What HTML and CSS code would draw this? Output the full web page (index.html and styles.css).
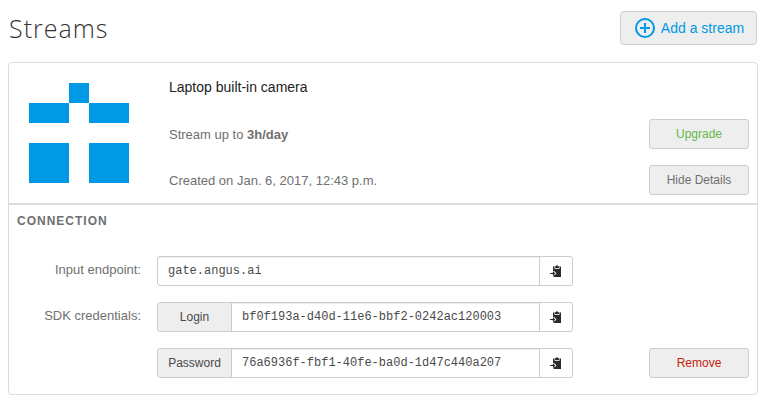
FILE: index.html
```
<!DOCTYPE html>
<html lang="en">
<head>
<meta charset="utf-8">
<title>Streams</title>
<link rel="stylesheet" href="styles.css">
</head>
<body>
<svg class="defs" width="0" height="0" aria-hidden="true">
  <symbol id="paste" viewBox="0 0 12 12">
    <path fill="#2b2b2b" d="M3 1.500h8V12H3.500V9.900H5L6.500 8.500 4.500 6.300H3z"/>
    <path fill="none" stroke="#fff" stroke-width=".8" d="M4.800 1.500v2h4.400v-2"/>
    <path fill="#2b2b2b" d="M5.200 3.100V1.300h.7C6 .6 6.400.2 7 .2s1 .4 1.100 1.100h.7v1.800z"/>
    <path fill="none" stroke="#2b2b2b" stroke-width="1.100" d="M0 8.500h4.500M2.900 6.800l1.700 1.700-1.700 1.700"/>
  </symbol>
</svg>
<header class="page-header">
  <h1>Streams</h1>
  <button class="btn btn-add">
    <svg width="20" height="20" viewBox="0 0 20 20" fill="none" stroke="#0099e5" stroke-width="2"><circle cx="10" cy="10" r="9"/><path d="M10 5v10M5 10h10"/></svg>
    <span>Add a stream</span>
  </button>
</header>
<main class="panel">
  <section class="summary">
    <svg class="identicon" width="100" height="100" viewBox="0 0 5 5" shape-rendering="crispEdges"><path fill="#0099e5" d="M2 0h1v1H2zM0 1h2v1H0zM3 1h2v1H3zM0 3h2v2H0zM3 3h2v2H3z"/></svg>
    <div class="info">
      <h2>Laptop built-in camera</h2>
      <div class="line"><span>Stream up to <b>3h/day</b></span><button class="btn upgrade">Upgrade</button></div>
      <div class="line"><span>Created on Jan. 6, 2017, 12:43 p.m.</span><button class="btn">Hide Details</button></div>
    </div>
  </section>
  <section class="connection">
    <h3>Connection</h3>
    <div class="row">
      <label>Input endpoint:</label>
      <div class="group"><code>gate.angus.ai</code><span class="copy"><svg width="12" height="12"><use href="#paste"/></svg></span></div>
    </div>
    <div class="row">
      <label>SDK credentials:</label>
      <div class="group"><span class="addon">Login</span><code>bf0f193a-d40d-11e6-bbf2-0242ac120003</code><span class="copy"><svg width="12" height="12"><use href="#paste"/></svg></span></div>
    </div>
    <div class="row">
      <label></label>
      <div class="group"><span class="addon">Password</span><code>76a6936f-fbf1-40fe-ba0d-1d47c440a207</code><span class="copy"><svg width="12" height="12"><use href="#paste"/></svg></span></div>
      <button class="btn remove">Remove</button>
    </div>
  </section>
</main>
</body>
</html>
```
FILE: styles.css
```
* { box-sizing: border-box; }
body {
  margin: 0;
  padding: 11px 9px 0 8px;
  background: #fff;
  color: #707070;
  font: 13px/20px "Liberation Sans", Arial, sans-serif;
}
.defs { display: block; }
h1, h2, h3 { margin: 0; }
.page-header {
  display: flex;
  justify-content: space-between;
  height: 51px;
  padding-right: 1px;
}
h1 {
  padding-left: 1px;
  color: #333;
  font: 300 25px/34px "Open Sans", sans-serif;
  letter-spacing: 1px;
}
.btn {
  display: block;
  width: 100px;
  height: 30px;
  padding: 0;
  border: 1px solid #ccc;
  border-radius: 3px;
  background: #eee;
  color: #707070;
  font: 12px/18px "Liberation Sans", Arial, sans-serif;
}
.btn-add {
  display: flex;
  align-items: center;
  justify-content: center;
  gap: 6px;
  width: 137px;
  height: 34px;
  padding-left: 2px;
  border-radius: 4px;
  color: #0099e5;
  font-size: 14px;
}
.upgrade { color: #65b84a; }
.remove { margin-left: auto; color: #c2230d; }
.panel {
  width: 750px;
  height: 333px;
  border: 1px solid #ddd;
  border-radius: 4px;
  box-shadow: 0 1px 1px rgba(0, 0, 0, .05);
}
.summary {
  display: flex;
  gap: 40px;
  height: 142px;
  padding: 14px 8px 0 20px;
  border-bottom: 2px solid #ddd;
}
.identicon { margin-top: 6px; }
.info { flex: 1; }
h2 {
  height: 42px;
  color: #222;
  font-size: 14px;
  font-weight: 400;
  line-height: 20px;
}
.line {
  display: flex;
  align-items: center;
  justify-content: space-between;
  height: 30px;
  margin-bottom: 16px;
}
.line span { padding-top: 2px; }
.connection { padding: 6px 8px 0; }
h3 {
  height: 45px;
  font-size: 12px;
  line-height: 20px;
  letter-spacing: 1px;
  text-transform: uppercase;
}
.row {
  display: flex;
  height: 30px;
  margin-bottom: 16px;
}
label {
  width: 124px;
  padding-top: 4px;
  text-align: right;
}
.group {
  display: flex;
  width: 416px;
  margin-left: 16px;
  border: 1px solid #ccc;
  border-radius: 3px;
  overflow: hidden;
  color: #4a4a4a;
  font-size: 12px;
  line-height: 28px;
}
.addon {
  width: 74px;
  border-right: 1px solid #ccc;
  background: #eee;
  text-align: center;
}
code {
  flex: 1;
  padding-left: 10px;
  box-shadow: inset 0 1px 1px rgba(0, 0, 0, .075);
  font: 12px/28px "Liberation Mono", monospace;
}
.copy {
  display: flex;
  align-items: center;
  justify-content: center;
  width: 33px;
  border-left: 1px solid #ccc;
}
```
